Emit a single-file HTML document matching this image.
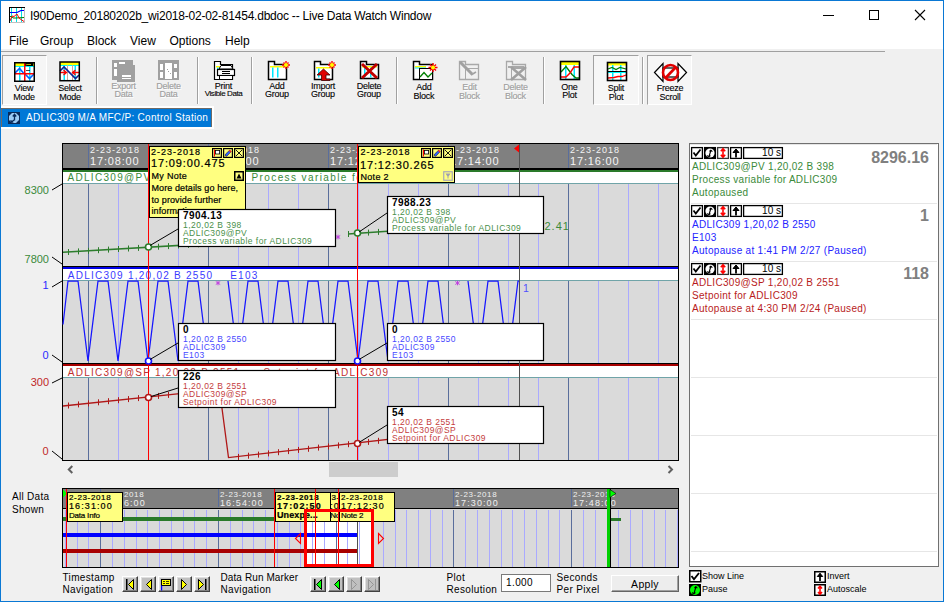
<!DOCTYPE html>
<html><head><meta charset="utf-8">
<style>
html,body{margin:0;padding:0;}
body{width:944px;height:602px;overflow:hidden;position:relative;background:#f0f0f0;font-family:"Liberation Sans",sans-serif;}
.a{position:absolute;white-space:pre;}
.t{position:absolute;white-space:pre;line-height:1;}
svg text{font-family:"Liberation Sans",sans-serif;}
</style></head><body>
<div class="a" style="left:0;top:0;width:944px;height:49px;background:#fff"></div>
<div class="a" style="left:1px;top:51px;width:884px;height:1px;background:#a0a0a0"></div>
<!-- ===== title bar ===== -->
<svg class="a" style="left:9px;top:7px" width="16" height="16">
<rect x="0" y="0" width="16" height="16" fill="#fff"/>
<rect x="2" y="1" width="1" height="14" fill="#00e0e0"/><rect x="7" y="1" width="1" height="14" fill="#00e0e0"/><rect x="12" y="1" width="1" height="14" fill="#00e0e0"/>
<polyline points="1,5.5 8,5.5 10,4.5 12,3.5 15,3.5" fill="none" stroke="#0000ff" stroke-width="1.2"/>
<polyline points="1,9.5 3,9.5 4,11 7,11 15,10.5" fill="none" stroke="#008000" stroke-width="1"/>
<polyline points="1,14 3,9 5,9.5 8,7 10,11 12,12.5 15,14.5" fill="none" stroke="#ff0000" stroke-width="1"/>
<rect x="0" y="0" width="16" height="1" fill="#000"/><rect x="0" y="0" width="1" height="16" fill="#000"/>
<rect x="15" y="1" width="1" height="15" fill="#c0c0c0"/><rect x="1" y="15" width="15" height="1" fill="#c0c0c0"/>
</svg>
<div class="t" style="left:30px;top:9.5px;font-size:12px;letter-spacing:-0.225px;color:#000">I90Demo_20180202b_wi2018-02-02-81454.dbdoc -- Live Data Watch Window</div>
<svg class="a" style="left:820px;top:8px" width="110" height="14">
<rect x="3" y="7" width="11" height="1" fill="#000"/>
<rect x="49.5" y="2.5" width="9" height="9" fill="none" stroke="#000" stroke-width="1"/>
<path d="M95 2 L105 12 M105 2 L95 12" stroke="#000" stroke-width="1.1"/>
</svg>
<!-- menu -->
<div class="t" style="left:9px;top:34.6px;font-size:12px">File</div>
<div class="t" style="left:40px;top:34.6px;font-size:12px">Group</div>
<div class="t" style="left:87px;top:34.6px;font-size:12px">Block</div>
<div class="t" style="left:130px;top:34.6px;font-size:12px">View</div>
<div class="t" style="left:169.5px;top:34.6px;font-size:12px">Options</div>
<div class="t" style="left:225px;top:34.6px;font-size:12px">Help</div>
<!-- ===== toolbar ===== -->
<style>
.bt{position:absolute;width:60px;text-align:center;font-size:9px;letter-spacing:-0.25px;line-height:8.8px;color:#000;white-space:pre;-webkit-text-stroke:0.1px #000;}
.bd{color:#a0a0a0;-webkit-text-stroke:0.15px #a0a0a0;text-shadow:1px 1px 0 #fff;}
.sep{position:absolute;top:57px;width:1px;height:47px;background:#a0a0a0;box-shadow:1px 0 0 #fff;}
.prs{position:absolute;top:55px;height:50px;border-top:1px solid #a0a0a0;border-left:1px solid #a0a0a0;border-bottom:1px solid #fff;border-right:1px solid #fff;box-sizing:border-box;background:#f6f6f6;}
</style>
<div class="prs" style="left:2px;width:45px"></div>
<div class="prs" style="left:593px;width:46px"></div>
<div class="prs" style="left:647px;width:45px"></div>
<div class="sep" style="left:96px"></div>
<div class="sep" style="left:197px"></div>
<div class="sep" style="left:251px"></div>
<div class="sep" style="left:396px"></div>
<div class="sep" style="left:543px"></div>
<div class="sep" style="left:642px"></div>

<div class="bt" style="left:-6px;top:84.2px">View
Mode</div>
<div class="bt" style="left:40px;top:83.8px">Select
Mode</div>
<div class="bt bd" style="left:93.5px;top:81.7px">Export
Data</div>
<div class="bt bd" style="left:138.5px;top:81.7px">Delete
Data</div>
<div class="bt" style="left:193.5px;top:81.7px">Print</div>
<div class="bt" style="left:193.5px;top:90.4px;font-size:8px;letter-spacing:-0.4px">Visible Data</div>
<div class="bt" style="left:247px;top:81.5px">Add
Group</div>
<div class="bt" style="left:293px;top:81.5px">Import
Group</div>
<div class="bt" style="left:339px;top:81.5px">Delete
Group</div>
<div class="bt" style="left:394px;top:83.2px">Add
Block</div>
<div class="bt bd" style="left:439.5px;top:83.2px">Edit
Block</div>
<div class="bt bd" style="left:485.5px;top:83.2px">Delete
Block</div>
<div class="bt" style="left:539.5px;top:82.5px">One
Plot</div>
<div class="bt" style="left:586px;top:84px">Split
Plot</div>
<div class="bt" style="left:640px;top:84px">Freeze
Scroll</div>

<svg class="a" style="left:0;top:0" width="700" height="110">
<!-- View Mode -->
<g>
<rect x="15" y="63" width="19" height="18" fill="#fff"/>
<rect x="15" y="63" width="19" height="3" fill="#ffff00"/>
<rect x="15" y="66" width="19" height="1" fill="#00ffff"/>
<rect x="19" y="66" width="1.5" height="15" fill="#00e8ff"/><rect x="29" y="66" width="1.5" height="15" fill="#00e8ff"/>
<rect x="25" y="63" width="8" height="3" fill="#000"/>
<polyline points="26,64.5 27,65 28,64 29,65 30,64 31,65" fill="none" stroke="#ffff00" stroke-width="0.7"/>
<polyline points="26,71 27,70 28,71 29,70 30,71" fill="none" stroke="#000" stroke-width="0.7"/>
<polyline points="15,73 19.5,68.5 23.5,73" fill="none" stroke="#0060ff" stroke-width="1.6"/>
<polyline points="25,74 29.5,78.5 34,74" fill="none" stroke="#0060ff" stroke-width="1.6"/>
<rect x="24" y="63" width="1.5" height="18" fill="#ff0000"/><rect x="15" y="73" width="19" height="1.5" fill="#ff0000"/>
<rect x="14.75" y="62.75" width="19.5" height="18.5" fill="none" stroke="#000" stroke-width="1.5"/>
</g>
<!-- Select Mode -->
<g>
<rect x="60" y="62" width="19" height="18" fill="#fff"/>
<rect x="60" y="62" width="19" height="3" fill="#ffff00"/>
<rect x="60" y="65" width="19" height="1" fill="#00ffff"/>
<rect x="63.5" y="65" width="1.5" height="15" fill="#00e8ff"/><rect x="74.5" y="65" width="1.5" height="15" fill="#00e8ff"/>
<rect x="67" y="65" width="1" height="15" fill="#c8a8a0"/><rect x="72" y="65" width="1" height="15" fill="#c8a8a0"/>
<polyline points="60,71 64,67 75.5,78.5 79,75" fill="none" stroke="#102090" stroke-width="1.6"/>
<path d="M60 72.5 H66 M63.5 70 L66.5 72.5 L63.5 75" fill="none" stroke="#ff0000" stroke-width="1.3"/>
<path d="M79 72.5 H73 M75.5 70 L72.5 72.5 L75.5 75" fill="none" stroke="#ff0000" stroke-width="1.3"/>
<rect x="60" y="62" width="19.3" height="18.7" fill="none" stroke="#000" stroke-width="1.5"/>
</g>
<!-- Export Data (disabled) -->
<g fill="#a0a0a0">
<rect x="112" y="60" width="21" height="20"/>
<rect x="114" y="63" width="3" height="4" fill="#fff"/><rect x="114" y="69" width="3" height="7" fill="#fff"/>
<rect x="119" y="62" width="6" height="2" fill="#fff"/>
<rect x="117" y="65" width="18" height="17"/>
<rect x="122" y="75" width="9" height="2" fill="#fff"/><rect x="122" y="78" width="9" height="1" fill="#fff"/>
</g>
<!-- Delete Data (disabled) -->
<g fill="#a0a0a0">
<rect x="158" y="60" width="21" height="20"/>
<rect x="160" y="64" width="3" height="6" fill="#fff"/><rect x="160" y="72" width="3" height="6" fill="#fff"/>
<rect x="165" y="63" width="7" height="16" fill="#fff"/>
<rect x="174" y="64" width="3" height="4" fill="#fff"/><rect x="174" y="72" width="3" height="6" fill="#fff"/>
<rect x="167" y="69" width="1" height="1"/><rect x="168" y="71" width="1" height="1"/><rect x="170" y="73" width="1" height="1"/>
</g>
<!-- Print -->
<g>
<path d="M214.5 61.5 H220.5 V64.5 H232.5 V79.5 H214.5 Z" fill="#fff" stroke="#000" stroke-width="1.2"/>
<rect x="216" y="66" width="15" height="1.5" fill="#ffff00"/><rect x="217" y="67.5" width="1.5" height="5" fill="#00e8ff"/>
<path d="M219 69 L221 65.5 H231 L233 69 Z" fill="#fff" stroke="#000" stroke-width="1"/>
<rect x="217.5" y="69.5" width="17" height="6" fill="#fff" stroke="#000" stroke-width="1.2"/>
<rect x="219.5" y="75.5" width="13" height="4" fill="#fff" stroke="#000" stroke-width="1"/>
<rect x="222" y="71" width="8" height="1" fill="#000"/><rect x="222" y="73" width="8" height="1" fill="#000"/>
</g>
<!-- Add Group -->
<g>
<path d="M268.5 61.5 H274.5 V64.5 H286.5 V79.5 H268.5 Z" fill="#fff" stroke="#000" stroke-width="1.5"/>
<rect x="270" y="66" width="14" height="1.5" fill="#ffff00"/>
<rect x="272" y="67.5" width="1.5" height="10" fill="#00e8ff"/><rect x="277" y="67.5" width="1.5" height="10" fill="#00e8ff"/>
<path d="M286 61 V69 M282 65 H290 M283.5 62.5 L288.5 67.5 M288.5 62.5 L283.5 67.5" stroke="#ff0000" stroke-width="1.4"/>
<circle cx="286" cy="65" r="2" fill="#ffff00"/>
</g>
<!-- Import Group -->
<g>
<path d="M314.5 61.5 H320.5 V64.5 H332.5 V79.5 H314.5 Z" fill="#fff" stroke="#000" stroke-width="1.5"/>
<rect x="316" y="67" width="15" height="1.5" fill="#ffff00"/>
<rect x="318" y="68.5" width="1.5" height="9" fill="#00e8ff"/>
<path d="M317 75 L323.5 69 L330 75 H326 V79 H330 V80.5 H321.5 V75 Z" fill="#e00000" stroke="#400000" stroke-width="0.8"/>
<path d="M332 61 V69 M328 65 H336 M329.5 62.5 L334.5 67.5 M334.5 62.5 L329.5 67.5" stroke="#ff0000" stroke-width="1.4"/>
<circle cx="332" cy="65" r="2" fill="#ffff00"/>
</g>
<!-- Delete Group -->
<g>
<path d="M360.5 61.5 H366.5 V64.5 H378.5 V78.5 H360.5 Z" fill="#fff" stroke="#000" stroke-width="1.5"/>
<rect x="362" y="66" width="15" height="1.5" fill="#ffff00"/>
<rect x="364" y="67.5" width="1.5" height="10" fill="#00e8ff"/><rect x="370" y="67.5" width="1.5" height="10" fill="#00e8ff"/>
<path d="M362 64 L377 78 M377 64 L362 78" stroke="#c00000" stroke-width="3"/>
</g>
<!-- Add Block -->
<g>
<path d="M413.5 61.5 H419.5 V64.5 H432.5 V79.5 H413.5 Z" fill="#fff" stroke="#000" stroke-width="1.5"/>
<rect x="415" y="66" width="11" height="1.5" fill="#ffff00"/><rect x="415" y="67.5" width="11" height="1" fill="#00e8ff"/>
<rect x="419.5" y="68.5" width="13" height="11" fill="#fff" stroke="#000" stroke-width="1"/>
<polyline points="420,77 424,72.5 428,77 432,73" fill="none" stroke="#008000" stroke-width="1.3"/>
<path d="M433 63 V72 M428.5 67.5 H437.5 M430 64.5 L436 70.5 M436 64.5 L430 70.5" stroke="#ff0000" stroke-width="1.4"/>
<circle cx="433" cy="67.5" r="2" fill="#ffff00"/>
</g>
<!-- Edit Block disabled -->
<g>
<path d="M459.5 61.5 H465.5 V64.5 H478.5 V79.5 H459.5 Z" fill="none" stroke="#a8a8a8" stroke-width="1.3"/>
<rect x="465.5" y="68.5" width="13" height="11" fill="none" stroke="#a8a8a8" stroke-width="1"/>
<path d="M460 62 L472 74" stroke="#a0a0a0" stroke-width="3"/>
<path d="M471 75 L476 72" stroke="#a0a0a0" stroke-width="1.5"/>
</g>
<!-- Delete Block disabled -->
<g>
<path d="M506.5 61.5 H512.5 V64.5 H525.5 V79.5 H506.5 Z" fill="none" stroke="#a8a8a8" stroke-width="1.3"/>
<rect x="508" y="66" width="16" height="2" fill="#a8a8a8"/>
<rect x="511.5" y="68.5" width="14" height="11" fill="none" stroke="#a8a8a8" stroke-width="1"/>
<path d="M511 67 L526 80 M526 67 L511 80" stroke="#a0a0a0" stroke-width="2.5"/>
</g>
<!-- One Plot -->
<g>
<rect x="561" y="62" width="18" height="17" fill="#fff"/>
<rect x="561" y="62" width="18" height="3" fill="#ffff00"/>
<rect x="565" y="65" width="1.5" height="14" fill="#00e8ff"/><rect x="573.5" y="65" width="1.5" height="14" fill="#00e8ff"/>
<polyline points="561,72 566,66.5 572,74.5 576,78 579,78" fill="none" stroke="#008000" stroke-width="1.4"/>
<polyline points="561,77 566,77 570,73 574,67 579,67" fill="none" stroke="#ff0000" stroke-width="1.4"/>
<rect x="560.5" y="61.5" width="19" height="18" fill="none" stroke="#000" stroke-width="1.6"/>
</g>
<!-- Split Plot -->
<g>
<rect x="608" y="63" width="18" height="17" fill="#fff"/>
<rect x="608" y="63" width="18" height="2.5" fill="#ffff00"/>
<rect x="612" y="65" width="1.5" height="15" fill="#00e8ff"/><rect x="620" y="65" width="1.5" height="15" fill="#00e8ff"/>
<polyline points="608,69 612,67.5 616,69.5 620,67.5 626,69" fill="none" stroke="#008000" stroke-width="1.2"/>
<rect x="608" y="71" width="18" height="1" fill="#000"/>
<rect x="608" y="72" width="18" height="1" fill="#00ffff"/>
<polyline points="608,78 614,77.5 618,76.5 622,76.5 626,75" fill="none" stroke="#ff0000" stroke-width="1.3"/>
<rect x="607.5" y="62.5" width="19" height="18" fill="none" stroke="#000" stroke-width="1.6"/>
</g>
<!-- Freeze Scroll -->
<g>
<path d="M654.5 72.5 L663 63.5 V81.5 Z M686.5 72.5 L678 63.5 V81.5 Z" fill="#fff" stroke="#000" stroke-width="1.2"/>
<rect x="663" y="68" width="15" height="9" fill="#fff" stroke="#000" stroke-width="1.2"/>
<circle cx="670.5" cy="72.5" r="7.5" fill="none" stroke="#e00000" stroke-width="2.6"/>
<path d="M665.5 78 L676 67" stroke="#e00000" stroke-width="2.6"/>
</g>
</svg>
<!-- ===== tab label ===== -->
<div class="a" style="left:1px;top:106px;width:213px;height:23px;background:#fff"></div>
<div class="a" style="left:1px;top:108px;width:211px;height:19px;background:#6e6a66"></div>
<div class="a" style="left:2px;top:109px;width:209px;height:18px;background:#0078d7"></div>
<svg class="a" style="left:8px;top:112px" width="12" height="12">
<rect x="0" y="0" width="12" height="12" fill="#0a2a5a"/>
<path d="M4 1 H8 L11 4 V8 L8 11 H4 L1 8 V4 Z" fill="#9ccaf4"/>
<path d="M6.5 2.5 V8.5 M4.8 4.5 L6.5 2.3 L8.2 4.5" fill="none" stroke="#0a2a5a" stroke-width="1.3"/>
<path d="M6 8 L3.5 10 M3 8 V10.3 H5.3" fill="none" stroke="#0a2a5a" stroke-width="1.1"/>
</svg>
<div class="t" style="left:26px;top:113.4px;font-size:10px;letter-spacing:0.3px;color:#fff">ADLIC309 M/A MFC/P: Control Station</div>
<!-- ===== main plot ===== -->
<svg class="a" style="left:0;top:0" width="944" height="602">
<rect x="62" y="143" width="617" height="318" fill="#000"/>
<rect x="63" y="144" width="615" height="24" fill="#808080"/>
<rect x="63" y="170" width="615" height="2" fill="#2a7a2a"/>
<rect x="63" y="172" width="615" height="11" fill="#fff"/>
<rect x="63" y="183" width="615" height="1" fill="#70a4a8"/>
<rect x="63" y="184" width="615" height="82" fill="#dadada"/>
<rect x="63" y="267" width="615" height="2" fill="#0000e8"/>
<rect x="63" y="269" width="615" height="11" fill="#fff"/>
<rect x="63" y="280" width="615" height="1" fill="#70a4a8"/>
<rect x="63" y="281" width="615" height="82" fill="#dadada"/>
<rect x="63" y="364" width="615" height="2" fill="#a80000"/>
<rect x="63" y="366" width="615" height="11" fill="#fff"/>
<rect x="63" y="377" width="615" height="1" fill="#70a4a8"/>
<rect x="63" y="378" width="615" height="82" fill="#dadada"/>
<rect x="88" y="144" width="1" height="24" fill="#5a6e9c"/>
<rect x="88" y="184" width="1" height="82" fill="#5a6e9c"/>
<rect x="88" y="281" width="1" height="82" fill="#5a6e9c"/>
<rect x="88" y="378" width="1" height="82" fill="#5a6e9c"/>
<rect x="118" y="184" width="1" height="82" fill="#aaaaff"/>
<rect x="118" y="281" width="1" height="82" fill="#aaaaff"/>
<rect x="118" y="378" width="1" height="82" fill="#aaaaff"/>
<rect x="148" y="184" width="1" height="82" fill="#aaaaff"/>
<rect x="148" y="281" width="1" height="82" fill="#aaaaff"/>
<rect x="148" y="378" width="1" height="82" fill="#aaaaff"/>
<rect x="178" y="184" width="1" height="82" fill="#aaaaff"/>
<rect x="178" y="281" width="1" height="82" fill="#aaaaff"/>
<rect x="178" y="378" width="1" height="82" fill="#aaaaff"/>
<rect x="208" y="144" width="1" height="24" fill="#5a6e9c"/>
<rect x="208" y="184" width="1" height="82" fill="#5a6e9c"/>
<rect x="208" y="281" width="1" height="82" fill="#5a6e9c"/>
<rect x="208" y="378" width="1" height="82" fill="#5a6e9c"/>
<rect x="238" y="184" width="1" height="82" fill="#aaaaff"/>
<rect x="238" y="281" width="1" height="82" fill="#aaaaff"/>
<rect x="238" y="378" width="1" height="82" fill="#aaaaff"/>
<rect x="268" y="184" width="1" height="82" fill="#aaaaff"/>
<rect x="268" y="281" width="1" height="82" fill="#aaaaff"/>
<rect x="268" y="378" width="1" height="82" fill="#aaaaff"/>
<rect x="298" y="184" width="1" height="82" fill="#aaaaff"/>
<rect x="298" y="281" width="1" height="82" fill="#aaaaff"/>
<rect x="298" y="378" width="1" height="82" fill="#aaaaff"/>
<rect x="328" y="144" width="1" height="24" fill="#5a6e9c"/>
<rect x="328" y="184" width="1" height="82" fill="#5a6e9c"/>
<rect x="328" y="281" width="1" height="82" fill="#5a6e9c"/>
<rect x="328" y="378" width="1" height="82" fill="#5a6e9c"/>
<rect x="358" y="184" width="1" height="82" fill="#aaaaff"/>
<rect x="358" y="281" width="1" height="82" fill="#aaaaff"/>
<rect x="358" y="378" width="1" height="82" fill="#aaaaff"/>
<rect x="388" y="184" width="1" height="82" fill="#aaaaff"/>
<rect x="388" y="281" width="1" height="82" fill="#aaaaff"/>
<rect x="388" y="378" width="1" height="82" fill="#aaaaff"/>
<rect x="418" y="184" width="1" height="82" fill="#aaaaff"/>
<rect x="418" y="281" width="1" height="82" fill="#aaaaff"/>
<rect x="418" y="378" width="1" height="82" fill="#aaaaff"/>
<rect x="448" y="144" width="1" height="24" fill="#5a6e9c"/>
<rect x="448" y="184" width="1" height="82" fill="#5a6e9c"/>
<rect x="448" y="281" width="1" height="82" fill="#5a6e9c"/>
<rect x="448" y="378" width="1" height="82" fill="#5a6e9c"/>
<rect x="478" y="184" width="1" height="82" fill="#aaaaff"/>
<rect x="478" y="281" width="1" height="82" fill="#aaaaff"/>
<rect x="478" y="378" width="1" height="82" fill="#aaaaff"/>
<rect x="508" y="184" width="1" height="82" fill="#aaaaff"/>
<rect x="508" y="281" width="1" height="82" fill="#aaaaff"/>
<rect x="508" y="378" width="1" height="82" fill="#aaaaff"/>
<rect x="538" y="184" width="1" height="82" fill="#aaaaff"/>
<rect x="538" y="281" width="1" height="82" fill="#aaaaff"/>
<rect x="538" y="378" width="1" height="82" fill="#aaaaff"/>
<rect x="568" y="144" width="1" height="24" fill="#5a6e9c"/>
<rect x="568" y="184" width="1" height="82" fill="#5a6e9c"/>
<rect x="568" y="281" width="1" height="82" fill="#5a6e9c"/>
<rect x="568" y="378" width="1" height="82" fill="#5a6e9c"/>
<rect x="598" y="184" width="1" height="82" fill="#aaaaff"/>
<rect x="598" y="281" width="1" height="82" fill="#aaaaff"/>
<rect x="598" y="378" width="1" height="82" fill="#aaaaff"/>
<rect x="628" y="184" width="1" height="82" fill="#aaaaff"/>
<rect x="628" y="281" width="1" height="82" fill="#aaaaff"/>
<rect x="628" y="378" width="1" height="82" fill="#aaaaff"/>
<rect x="658" y="184" width="1" height="82" fill="#aaaaff"/>
<rect x="658" y="281" width="1" height="82" fill="#aaaaff"/>
<rect x="658" y="378" width="1" height="82" fill="#aaaaff"/>
<text x="90" y="152.6" font-size="9" letter-spacing="1" fill="#f4f4f4">2-23-2018</text>
<text x="90" y="165" font-size="11" letter-spacing="0.84" fill="#f4f4f4">17:08:00</text>
<text x="210" y="152.6" font-size="9" letter-spacing="1" fill="#f4f4f4">2-23-2018</text>
<text x="210" y="165" font-size="11" letter-spacing="0.84" fill="#f4f4f4">17:10:00</text>
<text x="330" y="152.6" font-size="9" letter-spacing="1" fill="#f4f4f4">2-23-2018</text>
<text x="330" y="165" font-size="11" letter-spacing="0.84" fill="#f4f4f4">17:12:00</text>
<text x="450" y="152.6" font-size="9" letter-spacing="1" fill="#f4f4f4">2-23-2018</text>
<text x="450" y="165" font-size="11" letter-spacing="0.84" fill="#f4f4f4">17:14:00</text>
<text x="570" y="152.6" font-size="9" letter-spacing="1" fill="#f4f4f4">2-23-2018</text>
<text x="570" y="165" font-size="11" letter-spacing="0.84" fill="#f4f4f4">17:16:00</text>
<text x="67.5" y="181.3" font-size="10" letter-spacing="1.3" fill="#3a8a3a">ADLIC309@PV</text>
<text x="251.5" y="181.3" font-size="10" letter-spacing="1.4" fill="#3a8a3a">Process variable for ADLIC309</text>
<text x="67.8" y="278.7" font-size="10" letter-spacing="1.25" fill="#3a3aff">ADLIC309 1,20,02 B 2550</text>
<text x="230.2" y="278.7" font-size="10" letter-spacing="1.25" fill="#3a3aff">E103</text>
<text x="67.8" y="375.5" font-size="10" letter-spacing="1.25" fill="#c03030">ADLIC309@SP 1,20,02 B 2551</text>
<text x="263.5" y="375.5" font-size="10" letter-spacing="1.25" fill="#c03030">Setpoint for ADLIC309</text>
<polyline points="63,252.3 335,236.2" fill="none" stroke="#2d7d2d" stroke-width="1.5"/>
<path d="M68.5 249.0 V255.0 M78.5 248.4 V254.4 M88.5 247.8 V253.8 M98.5 247.2 V253.2 M108.5 246.6 V252.6 M118.5 246.0 V252.0 M128.5 245.5 V251.5 M138.5 244.9 V250.9 M148.5 244.3 V250.3 M158.5 243.7 V249.7 M168.5 243.1 V249.1 M178.5 242.5 V248.5 M188.5 241.9 V247.9 M198.5 241.3 V247.3 M208.5 240.7 V246.7 M218.5 240.1 V246.1 M228.5 239.5 V245.5 M238.5 239.0 V245.0 M248.5 238.4 V244.4 M258.5 237.8 V243.8 M268.5 237.2 V243.2 M278.5 236.6 V242.6 M288.5 236.0 V242.0 M298.5 235.4 V241.4 M308.5 234.8 V240.8 M318.5 234.2 V240.2 M328.5 233.6 V239.6 " stroke="#2d7d2d" stroke-width="1"/>
<polyline points="348,234 519,222.0" fill="none" stroke="#2d7d2d" stroke-width="1.5"/>
<path d="M348.5 231.0 V237.0 M358.5 230.3 V236.3 M368.5 229.6 V235.6 M378.5 228.9 V234.9 M388.5 228.2 V234.2 M398.5 227.5 V233.5 M408.5 226.8 V232.8 M418.5 226.1 V232.1 M428.5 225.4 V231.4 M438.5 224.7 V230.7 M448.5 224.0 V230.0 M458.5 223.3 V229.3 M468.5 222.6 V228.6 M478.5 221.9 V227.9 M488.5 221.2 V227.2 M498.5 220.5 V226.5 M508.5 219.8 V225.8 M518.5 219.1 V225.1 " stroke="#2d7d2d" stroke-width="1"/>
<polyline points="63,324.5 68,281 78,281 88,361 98,281 108,281 118,361 128,281 138,281 148,361 158,281 168,281 178,361 188,281 198,281 208,361" fill="none" stroke="#1414ff" stroke-width="1.25"/>
<polyline points="228,281 238,361 248,281 258,281 268,361 278,281 288,281 298,361 308,281 318,281 328,361 338,281 348,281 358,361 368,281 378,281 388,361 398,281 408,281 418,361 428,281 438,281 448,361" fill="none" stroke="#1414ff" stroke-width="1.25"/>
<polyline points="468,281 478,361 488,281 498,281 508,361 518,281 519,281" fill="none" stroke="#1414ff" stroke-width="1.25"/>
<polyline points="63,406 219.5,389.4 228.5,457.6 519,424.5" fill="none" stroke="#b01818" stroke-width="1.3"/>
<path d="M68.5 402.5 V408.5 M78.5 401.4 V407.4 M88.5 400.4 V406.4 M98.5 399.3 V405.3 M108.5 398.2 V404.2 M118.5 397.2 V403.2 M128.5 396.1 V402.1 M138.5 395.1 V401.1 M148.5 394.0 V400.0 M158.5 392.9 V398.9 M168.5 391.9 V397.9 M178.5 390.8 V396.8 M188.5 389.8 V395.8 M198.5 388.7 V394.7 M208.5 387.6 V393.6 M218.5 386.6 V392.6 " stroke="#b01818" stroke-width="1"/>
<path d="M238.5 453.9 V459.9 M248.5 452.7 V458.7 M258.5 451.6 V457.6 M268.5 450.4 V456.4 M278.5 449.2 V455.2 M288.5 448.1 V454.1 M298.5 446.9 V452.9 M308.5 445.8 V451.8 M318.5 444.6 V450.6 M328.5 443.5 V449.5 M338.5 442.4 V448.4 M348.5 441.2 V447.2 M358.5 440.1 V446.1 M368.5 438.9 V444.9 M378.5 437.8 V443.8 M388.5 436.6 V442.6 M398.5 435.4 V441.4 M408.5 434.3 V440.3 M418.5 433.1 V439.1 M428.5 432.0 V438.0 M438.5 430.9 V436.9 M448.5 429.7 V435.7 M458.5 428.6 V434.6 M468.5 427.4 V433.4 M478.5 426.2 V432.2 M488.5 425.1 V431.1 M498.5 423.9 V429.9 M508.5 422.8 V428.8 M518.5 421.6 V427.6 " stroke="#b01818" stroke-width="1"/>
<rect x="519" y="144" width="1" height="316" fill="#505050"/>
<path d="M514 148.5 L519 144.5 V152.5 Z" fill="#ff0000"/>
<rect x="148" y="144" width="1" height="316" fill="#ff0000"/>
<rect x="357" y="144" width="1" height="316" fill="#ff0000"/>
<path d="M335.8 235.5 L340.2 238.5 M340.2 235.5 L335.8 238.5 M338 234.7 V239.3" stroke="#c040e0" stroke-width="1"/>
<path d="M215.8 281.5 L220.2 284.5 M220.2 281.5 L215.8 284.5 M218 280.7 V285.3" stroke="#c040e0" stroke-width="1"/>
<path d="M455.3 281.5 L459.7 284.5 M459.7 281.5 L455.3 284.5 M457.5 280.7 V285.3" stroke="#c040e0" stroke-width="1"/>
<text x="523" y="291.5" font-size="10.5" fill="#5050ff">1</text>
<text x="544.5" y="229.5" font-size="11" letter-spacing="1" fill="#3a8a3a">2.41</text>
<circle cx="148.5" cy="247" r="3" fill="#fff" stroke="#2d7d2d" stroke-width="1.6"/>
<circle cx="357.5" cy="233" r="3" fill="#fff" stroke="#2d7d2d" stroke-width="1.6"/>
<circle cx="148.5" cy="361" r="3" fill="#fff" stroke="#1414ff" stroke-width="1.6"/>
<circle cx="357.5" cy="361" r="3" fill="#fff" stroke="#1414ff" stroke-width="1.6"/>
<circle cx="148.5" cy="397.5" r="3" fill="#fff" stroke="#b01818" stroke-width="1.6"/>
<circle cx="357.5" cy="443.5" r="3" fill="#fff" stroke="#b01818" stroke-width="1.6"/>
</svg><!-- ===== notes on main plot ===== -->
<style>
.note{position:absolute;background:#ffff80;border:1px solid #000;box-sizing:border-box;overflow:hidden;}
.note .t{color:#000;-webkit-text-stroke:0.2px #000;}
</style>
<div class="note" style="left:149px;top:146px;width:97px;height:72px">
<div class="t" style="left:1px;top:1.1px;font-size:9px;letter-spacing:1px">2-23-2018</div>
<div class="t" style="left:1px;top:11.3px;font-size:11px;letter-spacing:0.85px">17:09:00.475</div>
<div class="t" style="left:1.5px;top:24.9px;font-size:9px;letter-spacing:0.3px">My Note</div>
<div class="t" style="left:1.5px;top:37.1px;font-size:9px;letter-spacing:0.1px">More details go here,</div>
<div class="t" style="left:1.5px;top:49px;font-size:9px;letter-spacing:0.1px">to provide further</div>
<div class="t" style="left:1.5px;top:60.4px;font-size:9px;letter-spacing:0.1px">information.</div>
</div>
<div class="note" style="left:358px;top:146px;width:97px;height:37px">
<div class="t" style="left:1.5px;top:1.4px;font-size:9px;letter-spacing:1px">2-23-2018</div>
<div class="t" style="left:1px;top:12.7px;font-size:11px;letter-spacing:0.85px">17:12:30.265</div>
<div class="t" style="left:1.5px;top:26.4px;font-size:9px;letter-spacing:0.3px">Note 2</div>
</div>
<svg class="a" style="left:0;top:0" width="944" height="300">
<defs>
<g id="nbtn">
<rect x="0.6" y="0.6" width="8.8" height="8.8" fill="none" stroke="#000" stroke-width="1.2"/>
<rect x="2" y="1.5" width="1" height="7" fill="#ff0000"/>
<rect x="3.4" y="2.4" width="4.2" height="3.6" fill="#fff" stroke="#000" stroke-width="0.8"/>
<rect x="11.6" y="0.6" width="8.8" height="8.8" fill="none" stroke="#000" stroke-width="1.2"/>
<path d="M13.2 7.8 L14.8 8.3 L19 3.8 L17.6 2.2 L13.4 6.2 Z" fill="#3060ff" stroke="#000" stroke-width="0.5"/>
<path d="M17.4 2.3 L19 3.9" stroke="#ff2020" stroke-width="1.4"/>
<rect x="22.6" y="0.6" width="8.8" height="8.8" fill="none" stroke="#000" stroke-width="1.2"/>
<path d="M23.8 1.8 L30.2 8.2 M30.2 1.8 L23.8 8.2" stroke="#000" stroke-width="0.9"/>
</g>
</defs>
<use href="#nbtn" x="212" y="148"/>
<use href="#nbtn" x="421" y="148"/>
<rect x="234.75" y="171.75" width="8.5" height="8.5" fill="none" stroke="#000" stroke-width="1.5"/>
<path d="M236.5 178.5 L239 173.5 L241.5 178.5 Z" fill="#000"/>
<rect x="443.75" y="171.75" width="8.5" height="8.5" fill="none" stroke="#a8a8b8" stroke-width="1.2"/>
<path d="M445.5 173.5 H450.5 L448.5 176.5 V178.5 H447.5 V176.5 Z" fill="#a0a0b0"/>
</svg>
<svg class="a" style="left:0;top:0" width="944" height="602">
<line x1="150" y1="245.5" x2="178" y2="229" stroke="#000" stroke-width="1"/>
<line x1="359" y1="232" x2="387" y2="213" stroke="#000" stroke-width="1"/>
<line x1="150" y1="359.5" x2="178" y2="343" stroke="#000" stroke-width="1"/>
<line x1="359" y1="359.5" x2="387" y2="343" stroke="#000" stroke-width="1"/>
<line x1="151" y1="396.5" x2="178" y2="388" stroke="#000" stroke-width="1"/>
<line x1="359" y1="442.5" x2="387" y2="425" stroke="#000" stroke-width="1"/>
<rect x="178.5" y="209.5" width="157" height="37" fill="#fff" stroke="#000" stroke-width="1.2"/>
<text x="183" y="219" font-size="10" font-weight="bold" letter-spacing="0.45" fill="#000">7904.13</text>
<text x="183" y="228" font-size="8.5" letter-spacing="0.45" fill="#4a904a">1,20,02 B 398</text>
<text x="183" y="236" font-size="8.5" letter-spacing="0.45" fill="#4a904a">ADLIC309@PV</text>
<text x="183" y="244" font-size="8.5" letter-spacing="0.45" fill="#4a904a">Process variable for ADLIC309</text>
<rect x="387.5" y="196.5" width="156" height="37" fill="#fff" stroke="#000" stroke-width="1.2"/>
<text x="392" y="206" font-size="10" font-weight="bold" letter-spacing="0.45" fill="#000">7988.23</text>
<text x="392" y="215" font-size="8.5" letter-spacing="0.45" fill="#4a904a">1,20,02 B 398</text>
<text x="392" y="223" font-size="8.5" letter-spacing="0.45" fill="#4a904a">ADLIC309@PV</text>
<text x="392" y="231" font-size="8.5" letter-spacing="0.45" fill="#4a904a">Process variable for ADLIC309</text>
<rect x="178.5" y="323.5" width="157" height="37" fill="#fff" stroke="#000" stroke-width="1.2"/>
<text x="183" y="333" font-size="10" font-weight="bold" letter-spacing="0.45" fill="#000">0</text>
<text x="183" y="342" font-size="8.5" letter-spacing="0.45" fill="#4848ff">1,20,02 B 2550</text>
<text x="183" y="350" font-size="8.5" letter-spacing="0.45" fill="#4848ff">ADLIC309</text>
<text x="183" y="358" font-size="8.5" letter-spacing="0.45" fill="#4848ff">E103</text>
<rect x="387.5" y="323.5" width="156" height="37" fill="#fff" stroke="#000" stroke-width="1.2"/>
<text x="392" y="333" font-size="10" font-weight="bold" letter-spacing="0.45" fill="#000">0</text>
<text x="392" y="342" font-size="8.5" letter-spacing="0.45" fill="#4848ff">1,20,02 B 2550</text>
<text x="392" y="350" font-size="8.5" letter-spacing="0.45" fill="#4848ff">ADLIC309</text>
<text x="392" y="358" font-size="8.5" letter-spacing="0.45" fill="#4848ff">E103</text>
<rect x="178.5" y="370.5" width="157" height="37" fill="#fff" stroke="#000" stroke-width="1.2"/>
<text x="183" y="380" font-size="10" font-weight="bold" letter-spacing="0.45" fill="#000">226</text>
<text x="183" y="389" font-size="8.5" letter-spacing="0.45" fill="#c43c3c">1,20,02 B 2551</text>
<text x="183" y="397" font-size="8.5" letter-spacing="0.45" fill="#c43c3c">ADLIC309@SP</text>
<text x="183" y="405" font-size="8.5" letter-spacing="0.45" fill="#c43c3c">Setpoint for ADLIC309</text>
<rect x="387.5" y="406.5" width="156" height="37" fill="#fff" stroke="#000" stroke-width="1.2"/>
<text x="392" y="416" font-size="10" font-weight="bold" letter-spacing="0.45" fill="#000">54</text>
<text x="392" y="425" font-size="8.5" letter-spacing="0.45" fill="#c43c3c">1,20,02 B 2551</text>
<text x="392" y="433" font-size="8.5" letter-spacing="0.45" fill="#c43c3c">ADLIC309@SP</text>
<text x="392" y="441" font-size="8.5" letter-spacing="0.45" fill="#c43c3c">Setpoint for ADLIC309</text>
</svg><!-- ===== axis labels / scrollbar ===== -->
<style>.yl{position:absolute;white-space:pre;line-height:1;font-size:11px;text-align:right;width:40px;}</style>
<div class="yl" style="left:9px;top:184.5px;color:#3a8a3a">8300</div>
<div class="yl" style="left:9px;top:253.7px;color:#3a8a3a">7800</div>
<div class="yl" style="left:8.5px;top:280.3px;color:#2a2aff">1</div>
<div class="yl" style="left:8.5px;top:349.7px;color:#2a2aff">0</div>
<div class="yl" style="left:9px;top:376.5px;color:#c02828">300</div>
<div class="yl" style="left:8.5px;top:446px;color:#c02828">0</div>
<svg class="a" style="left:0;top:0" width="700" height="480">
<path d="M52 190 L62 184 M52 257 L62 264 M52 287 L62 281 M52 355 L62 362 M52 383 L62 378 M52 451 L62 459" stroke="#000" stroke-width="1" fill="none"/>
<rect x="329" y="462" width="69" height="15" fill="#cdcdcd"/>
<path d="M72.3 466 L68.8 469.5 L72.3 473" stroke="#606060" stroke-width="2" fill="none"/>
<path d="M668.5 466 L672 469.5 L668.5 473" stroke="#606060" stroke-width="2" fill="none"/>
</svg>
<div class="t" style="left:12px;top:490px;font-size:10px;letter-spacing:0.3px;color:#000;line-height:13px">All Data
Shown</div>
<!-- ===== right panel ===== -->
<div class="a" style="left:689px;top:143px;width:248px;height:422px;border:1px solid #707070;background:#fff"></div>
<svg class="a" style="left:0;top:0" width="944" height="602">
<rect x="691" y="203" width="246" height="1" fill="#e6e6e6"/>
<rect x="691" y="261" width="246" height="1" fill="#e6e6e6"/>
<rect x="691" y="319" width="246" height="1" fill="#e6e6e6"/>
<rect x="691" y="377" width="246" height="1" fill="#e6e6e6"/>
<rect x="691" y="435" width="246" height="1" fill="#e6e6e6"/>
<rect x="691" y="493" width="246" height="1" fill="#e6e6e6"/>
<rect x="691" y="551" width="246" height="1" fill="#e6e6e6"/>
<rect x="690" y="144" width="247" height="1" fill="#e6e6e6"/>
<defs><g id="eicons">
<rect x="0.6" y="0.6" width="10.8" height="10.8" fill="#fff" stroke="#000" stroke-width="1.3"/>
<path d="M2.5 5.5 L4.8 8.5 L9.5 2.5" fill="none" stroke="#000" stroke-width="1.8"/>
<rect x="13.6" y="0.6" width="10.8" height="10.8" fill="#000" stroke="#000" stroke-width="1.3"/>
<circle cx="19" cy="6" r="4.6" fill="#fff"/>
<path d="M18 9.5 L20 3 M20 3 L18.5 4.5 M20 3 L21.3 4.8 M17.6 9.8 L16.3 8.5 M17.8 9.8 L19.5 8.6" fill="none" stroke="#000" stroke-width="1.1"/>
<rect x="26.6" y="0.6" width="10.8" height="10.8" fill="#fff" stroke="#333" stroke-width="1.3"/>
<path d="M32 2 V10 M29.8 4.2 L32 1.8 L34.2 4.2 M29.8 7.8 L32 10.2 L34.2 7.8" fill="none" stroke="#ff0000" stroke-width="1.6"/>
<rect x="39.6" y="0.6" width="10.8" height="10.8" fill="#fff" stroke="#000" stroke-width="1.3"/>
<path d="M45 2 V10.5" stroke="#000" stroke-width="1.8"/><path d="M42 5.5 L45 2 L48 5.5 Z" fill="#000" stroke="#000" stroke-width="1"/>
<rect x="52.6" y="0.6" width="38.8" height="10.8" fill="#fff" stroke="#000" stroke-width="1.3"/>
</g></defs>
<use href="#eicons" x="691" y="147"/>
<use href="#eicons" x="691" y="205"/>
<use href="#eicons" x="691" y="263"/>
</svg>
<div class="t" style="left:743px;width:38px;text-align:right;top:148.4px;font-size:10px">10 s</div>
<div class="t" style="left:692px;top:161.5px;font-size:10px;letter-spacing:0.3px;color:#3a8a3a">ADLIC309@PV 1,20,02 B 398</div>
<div class="t" style="left:692px;top:174.5px;font-size:10px;letter-spacing:0.3px;color:#3a8a3a">Process variable for ADLIC309</div>
<div class="t" style="left:692px;top:187.5px;font-size:10px;letter-spacing:0.3px;color:#3a8a3a">Autopaused</div>
<div class="t" style="left:829px;width:100px;text-align:right;top:149.8px;font-size:16px;font-weight:bold;color:#808080">8296.16</div>
<div class="t" style="left:743px;width:38px;text-align:right;top:206.4px;font-size:10px">10 s</div>
<div class="t" style="left:692px;top:219.5px;font-size:10px;letter-spacing:0.3px;color:#2424ff">ADLIC309 1,20,02 B 2550</div>
<div class="t" style="left:692px;top:232.5px;font-size:10px;letter-spacing:0.3px;color:#2424ff">E103</div>
<div class="t" style="left:692px;top:245.5px;font-size:10px;letter-spacing:0.3px;color:#2424ff">Autopause at 1:41 PM 2/27 (Paused)</div>
<div class="t" style="left:829px;width:100px;text-align:right;top:207.8px;font-size:16px;font-weight:bold;color:#808080">1</div>
<div class="t" style="left:743px;width:38px;text-align:right;top:264.4px;font-size:10px">10 s</div>
<div class="t" style="left:692px;top:277.5px;font-size:10px;letter-spacing:0.3px;color:#b81c1c">ADLIC309@SP 1,20,02 B 2551</div>
<div class="t" style="left:692px;top:290.5px;font-size:10px;letter-spacing:0.3px;color:#b81c1c">Setpoint for ADLIC309</div>
<div class="t" style="left:692px;top:303.5px;font-size:10px;letter-spacing:0.3px;color:#b81c1c">Autopause at 4:30 PM 2/24 (Paused)</div>
<div class="t" style="left:829px;width:100px;text-align:right;top:265.8px;font-size:16px;font-weight:bold;color:#808080">118</div><!-- ===== overview plot ===== -->
<svg class="a" style="left:0;top:0" width="944" height="602">
<rect x="62" y="488" width="617" height="80" fill="#000"/>
<rect x="63" y="489" width="615" height="19" fill="#808080"/>
<rect x="63" y="509" width="615" height="58" fill="#dadada"/>
<rect x="307" y="512" width="64" height="52" fill="#fff"/>
<rect x="65" y="510" width="1" height="57" fill="#aaaaff"/>
<rect x="77" y="510" width="1" height="57" fill="#aaaaff"/>
<rect x="88" y="510" width="1" height="57" fill="#aaaaff"/>
<rect x="100" y="489" width="1" height="18" fill="#5a6e9c"/>
<rect x="100" y="510" width="1" height="57" fill="#5a6e9c"/>
<rect x="112" y="510" width="1" height="57" fill="#aaaaff"/>
<rect x="124" y="510" width="1" height="57" fill="#aaaaff"/>
<rect x="136" y="510" width="1" height="57" fill="#aaaaff"/>
<rect x="147" y="510" width="1" height="57" fill="#aaaaff"/>
<rect x="159" y="510" width="1" height="57" fill="#aaaaff"/>
<rect x="171" y="510" width="1" height="57" fill="#aaaaff"/>
<rect x="183" y="510" width="1" height="57" fill="#aaaaff"/>
<rect x="194" y="510" width="1" height="57" fill="#aaaaff"/>
<rect x="206" y="510" width="1" height="57" fill="#aaaaff"/>
<rect x="218" y="489" width="1" height="18" fill="#5a6e9c"/>
<rect x="218" y="510" width="1" height="57" fill="#5a6e9c"/>
<rect x="230" y="510" width="1" height="57" fill="#aaaaff"/>
<rect x="242" y="510" width="1" height="57" fill="#aaaaff"/>
<rect x="253" y="510" width="1" height="57" fill="#aaaaff"/>
<rect x="265" y="510" width="1" height="57" fill="#aaaaff"/>
<rect x="277" y="510" width="1" height="57" fill="#aaaaff"/>
<rect x="289" y="510" width="1" height="57" fill="#aaaaff"/>
<rect x="300" y="510" width="1" height="57" fill="#aaaaff"/>
<rect x="312" y="510" width="1" height="57" fill="#aaaaff"/>
<rect x="324" y="510" width="1" height="57" fill="#aaaaff"/>
<rect x="336" y="489" width="1" height="18" fill="#5a6e9c"/>
<rect x="336" y="510" width="1" height="57" fill="#5a6e9c"/>
<rect x="347" y="510" width="1" height="57" fill="#aaaaff"/>
<rect x="359" y="510" width="1" height="57" fill="#aaaaff"/>
<rect x="371" y="510" width="1" height="57" fill="#aaaaff"/>
<rect x="383" y="510" width="1" height="57" fill="#aaaaff"/>
<rect x="395" y="510" width="1" height="57" fill="#aaaaff"/>
<rect x="406" y="510" width="1" height="57" fill="#aaaaff"/>
<rect x="418" y="510" width="1" height="57" fill="#aaaaff"/>
<rect x="430" y="510" width="1" height="57" fill="#aaaaff"/>
<rect x="442" y="510" width="1" height="57" fill="#aaaaff"/>
<rect x="453" y="489" width="1" height="18" fill="#5a6e9c"/>
<rect x="453" y="510" width="1" height="57" fill="#5a6e9c"/>
<rect x="465" y="510" width="1" height="57" fill="#aaaaff"/>
<rect x="477" y="510" width="1" height="57" fill="#aaaaff"/>
<rect x="489" y="510" width="1" height="57" fill="#aaaaff"/>
<rect x="501" y="510" width="1" height="57" fill="#aaaaff"/>
<rect x="512" y="510" width="1" height="57" fill="#aaaaff"/>
<rect x="524" y="510" width="1" height="57" fill="#aaaaff"/>
<rect x="536" y="510" width="1" height="57" fill="#aaaaff"/>
<rect x="548" y="510" width="1" height="57" fill="#aaaaff"/>
<rect x="559" y="510" width="1" height="57" fill="#aaaaff"/>
<rect x="571" y="489" width="1" height="18" fill="#5a6e9c"/>
<rect x="571" y="510" width="1" height="57" fill="#5a6e9c"/>
<rect x="583" y="510" width="1" height="57" fill="#aaaaff"/>
<rect x="595" y="510" width="1" height="57" fill="#aaaaff"/>
<rect x="607" y="510" width="1" height="57" fill="#aaaaff"/>
<rect x="618" y="510" width="1" height="57" fill="#aaaaff"/>
<rect x="630" y="510" width="1" height="57" fill="#aaaaff"/>
<rect x="642" y="510" width="1" height="57" fill="#aaaaff"/>
<rect x="654" y="510" width="1" height="57" fill="#aaaaff"/>
<rect x="665" y="510" width="1" height="57" fill="#aaaaff"/>
<rect x="677" y="510" width="1" height="57" fill="#aaaaff"/>
<text x="102" y="497" font-family="Liberation Sans" font-size="8" letter-spacing="0.65" fill="#f0f0f0">2-23-2018</text>
<text x="102" y="506" font-family="Liberation Sans" font-size="9" letter-spacing="1.1" fill="#f0f0f0">16:36:00</text>
<text x="220" y="497" font-family="Liberation Sans" font-size="8" letter-spacing="0.65" fill="#f0f0f0">2-23-2018</text>
<text x="220" y="506" font-family="Liberation Sans" font-size="9" letter-spacing="1.1" fill="#f0f0f0">16:54:00</text>
<text x="338" y="497" font-family="Liberation Sans" font-size="8" letter-spacing="0.65" fill="#f0f0f0">2-23-2018</text>
<text x="338" y="506" font-family="Liberation Sans" font-size="9" letter-spacing="1.1" fill="#f0f0f0">17:12:00</text>
<text x="455" y="497" font-family="Liberation Sans" font-size="8" letter-spacing="0.65" fill="#f0f0f0">2-23-2018</text>
<text x="455" y="506" font-family="Liberation Sans" font-size="9" letter-spacing="1.1" fill="#f0f0f0">17:30:00</text>
<text x="573" y="497" font-family="Liberation Sans" font-size="8" letter-spacing="0.65" fill="#f0f0f0">2-23-2018</text>
<text x="573" y="506" font-family="Liberation Sans" font-size="9" letter-spacing="1.1" fill="#f0f0f0">17:48:00</text>
<rect x="63" y="517" width="212" height="4" fill="#2a7a2a"/>
<rect x="608" y="518" width="13" height="3" fill="#2a7a2a"/>
<rect x="63" y="533" width="294" height="4" fill="#0000ff"/>
<rect x="63" y="549" width="294" height="4" fill="#a80000"/>
<rect x="357" y="509" width="1" height="58" fill="#505050"/>
<rect x="607" y="489" width="3" height="78" fill="#00d000"/>
<rect x="610" y="489" width="1" height="78" fill="#000"/>
<path d="M610 489.5 L616 493.5 L610 497.5 Z" fill="#00ff00" stroke="#000" stroke-width="0.6"/>
<path d="M63 489.5 L67 493.5 L63 497.5 Z" fill="#00ff00"/>
</svg>
<div class="note" style="left:67px;top:492px;width:56px;height:30px">
<div class="t" style="left:1px;top:0.9px;font-size:8px;letter-spacing:0.65px;">2-23-2018</div>
<div class="t" style="left:1px;top:9.1px;font-size:9px;letter-spacing:1.1px;">16:31:00</div>
<div class="t" style="left:1px;top:18.8px;font-size:8px;letter-spacing:-0.2px;">Data Info</div>
</div>
<div class="note" style="left:316px;top:492px;width:56px;height:30px">
<div class="t" style="left:1px;top:0.9px;font-size:8px;letter-spacing:0.65px;">2-23-2018</div>
<div class="t" style="left:1px;top:9.1px;font-size:9px;letter-spacing:1.1px;">17:09:00</div>
<div class="t" style="left:1px;top:18.8px;font-size:8px;letter-spacing:-0.2px;">My Note</div>
</div>
<div class="note" style="left:275px;top:492px;width:56px;height:30px">
<div class="t" style="left:1px;top:0.9px;font-size:8px;letter-spacing:0.65px;font-weight:bold;">2-23-2018</div>
<div class="t" style="left:1px;top:9.1px;font-size:9px;letter-spacing:1.1px;font-weight:bold;">17:02:50</div>
<div class="t" style="left:1px;top:18.3px;font-size:9px;letter-spacing:0.1px;font-weight:bold;">Unexpe...</div>
</div>
<div class="note" style="left:339px;top:492px;width:56px;height:30px">
<div class="t" style="left:1px;top:0.9px;font-size:8px;letter-spacing:0.65px;">2-23-2018</div>
<div class="t" style="left:1px;top:9.1px;font-size:9px;letter-spacing:1.1px;">17:12:30</div>
<div class="t" style="left:1px;top:18.8px;font-size:8px;letter-spacing:-0.2px;">Note 2</div>
</div>
<svg class="a" style="left:0;top:0" width="944" height="602">
<rect x="66" y="489" width="1" height="78" fill="#ff0000"/>
<rect x="274" y="489" width="1" height="78" fill="#ff0000"/>
<rect x="315" y="489" width="1" height="78" fill="#ff0000"/>
<rect x="338" y="489" width="1" height="78" fill="#ff0000"/>
<rect x="305.5" y="510.5" width="67" height="55" fill="none" stroke="#ff0000" stroke-width="3"/>
<path d="M300.5 533.5 L295.5 538.5 L300.5 543.5 Z" fill="none" stroke="#ff0000" stroke-width="1.1"/>
<path d="M378.5 533.5 L383.5 538.5 L378.5 543.5 Z" fill="none" stroke="#ff0000" stroke-width="1.1"/>
</svg><!-- ===== nav bar ===== -->
<style>
.nl{position:absolute;white-space:pre;font-size:10px;letter-spacing:0.35px;line-height:12.5px;color:#000;}
.nb{position:absolute;top:576px;width:16px;height:16px;box-sizing:border-box;background:#c0c0c0;border-top:1px solid #fff;border-left:1px solid #fff;border-right:1px solid #404040;border-bottom:1px solid #404040;box-shadow:inset -1px -1px 0 #808080, inset 1px 1px 0 #dfdfdf;}
</style>
<div class="nl" style="left:62.5px;top:571.9px">Timestamp
Navigation</div>
<div class="nl" style="left:220.5px;top:571.9px;letter-spacing:0.1px">Data Run Marker</div>
<div class="nl" style="left:220.5px;top:584.4px">Navigation</div>
<div class="nl" style="left:446.5px;top:571.9px">Plot
Resolution</div>
<div class="nl" style="left:556.5px;top:571.9px">Seconds
Per Pixel</div>
<div class="nb" style="left:122px"></div><div class="nb" style="left:140px"></div><div class="nb" style="left:158px"></div><div class="nb" style="left:176px"></div><div class="nb" style="left:194px"></div>
<div class="nb" style="left:310px"></div><div class="nb" style="left:328px"></div><div class="nb" style="left:346px"></div><div class="nb" style="left:364px"></div>
<svg class="a" style="left:0;top:570px" width="944" height="32">
<g stroke="#000" stroke-width="1" stroke-linejoin="miter">
<rect x="126" y="9" width="1.5" height="11" fill="#000" stroke="none"/>
<path d="M133.5 9.5 L128.5 14.5 L133.5 19.5 Z" fill="#ffff00"/>
<path d="M151.5 9.5 L146.5 14.5 L151.5 19.5 Z" fill="#ffff00"/>
<rect x="161.5" y="9.5" width="9" height="6" fill="#ffff00"/>
<path d="M163 11.5 H165 M166 11.5 H169 M163 13.5 H165 M166 13.5 H169" stroke-width="0.8"/>
<rect x="161" y="15.5" width="1.2" height="5" fill="#0000ff" stroke="none"/>
<path d="M181.5 9.5 L186.5 14.5 L181.5 19.5 Z" fill="#ffff00"/>
<path d="M198.5 9.5 L203.5 14.5 L198.5 19.5 Z" fill="#ffff00"/>
<rect x="205" y="9" width="1.5" height="11" fill="#000" stroke="none"/>
<rect x="314" y="9" width="1.5" height="11" fill="#000" stroke="none"/>
<path d="M321.5 9.5 L316.5 14.5 L321.5 19.5 Z" fill="#00ff00"/>
<path d="M339.5 9.5 L334.5 14.5 L339.5 19.5 Z" fill="#00ff00"/>
</g>
<g stroke="#909090" stroke-width="0.9" fill="none">
<path d="M351.5 9.5 L356.5 14.5 L351.5 19.5 Z"/>
<path d="M368.5 9.5 L373.5 14.5 L368.5 19.5 Z M375.5 9 V20"/>
</g>
</svg>
<!-- plot resolution input -->
<div class="a" style="left:501px;top:574px;width:50px;height:18px;box-sizing:border-box;background:#fff;border:1px solid #7a7a7a"></div>
<div class="t" style="left:506px;top:577.8px;font-size:10px;letter-spacing:0.4px">1.000</div>
<div class="a" style="left:611px;top:575px;width:68px;height:17px;box-sizing:border-box;background:#ededed;border-top:1px solid #fff;border-left:1px solid #fff;border-right:1px solid #646464;border-bottom:1px solid #646464;box-shadow:inset -1px -1px 0 #a0a0a0"></div>
<div class="t" style="left:611px;width:68px;text-align:center;top:578.5px;font-size:10.5px;letter-spacing:0.3px">Apply</div>
<!-- legend -->
<svg class="a" style="left:689px;top:570px" width="200" height="28">
<rect x="0.75" y="0.75" width="11" height="11" fill="#fff" stroke="#000" stroke-width="1.5"/>
<path d="M2.5 6 L5 9.3 L10 3" fill="none" stroke="#000" stroke-width="1.9"/>
<rect x="0" y="14" width="12" height="12" fill="#000"/>
<circle cx="6" cy="20" r="5" fill="#00ff00"/>
<path d="M5 23.5 L7 16.5 M7 16.5 L5.5 18 M7 16.5 L8.3 18.3 M4.6 23.8 L3.3 22.5 M4.8 23.8 L6.5 22.6" fill="none" stroke="#000" stroke-width="1.1"/>
<rect x="125.75" y="1.75" width="10.5" height="10.5" fill="#fff" stroke="#000" stroke-width="1.5"/>
<path d="M131 3.5 V11" stroke="#000" stroke-width="1.8"/><path d="M128.3 6.5 L131 3.3 L133.7 6.5 Z" fill="#000" stroke="#000" stroke-width="1"/>
<rect x="125.75" y="14.75" width="10.5" height="10.5" fill="#fff" stroke="#000" stroke-width="1.5"/>
<path d="M131 16.5 V24 M129 18.5 L131 16.3 L133 18.5 M129 22 L131 24.2 L133 22" fill="none" stroke="#ff0000" stroke-width="1.6"/>
</svg>
<div class="t" style="left:702px;top:572px;font-size:9px;color:#000">Show Line</div>
<div class="t" style="left:702px;top:585px;font-size:9px;color:#000">Pause</div>
<div class="t" style="left:827px;top:572px;font-size:9px;color:#000">Invert</div>
<div class="t" style="left:827px;top:585px;font-size:9px;color:#000">Autoscale</div>
<div class="a" style="left:0;top:0;width:944px;height:1px;background:#0a78d4"></div>
<div class="a" style="left:0;top:0;width:1px;height:602px;background:#0a78d4"></div>
<div class="a" style="left:943px;top:0;width:1px;height:602px;background:#0a78d4"></div>
<div class="a" style="left:0;top:601px;width:944px;height:1px;background:#0a78d4"></div>
</body></html>
